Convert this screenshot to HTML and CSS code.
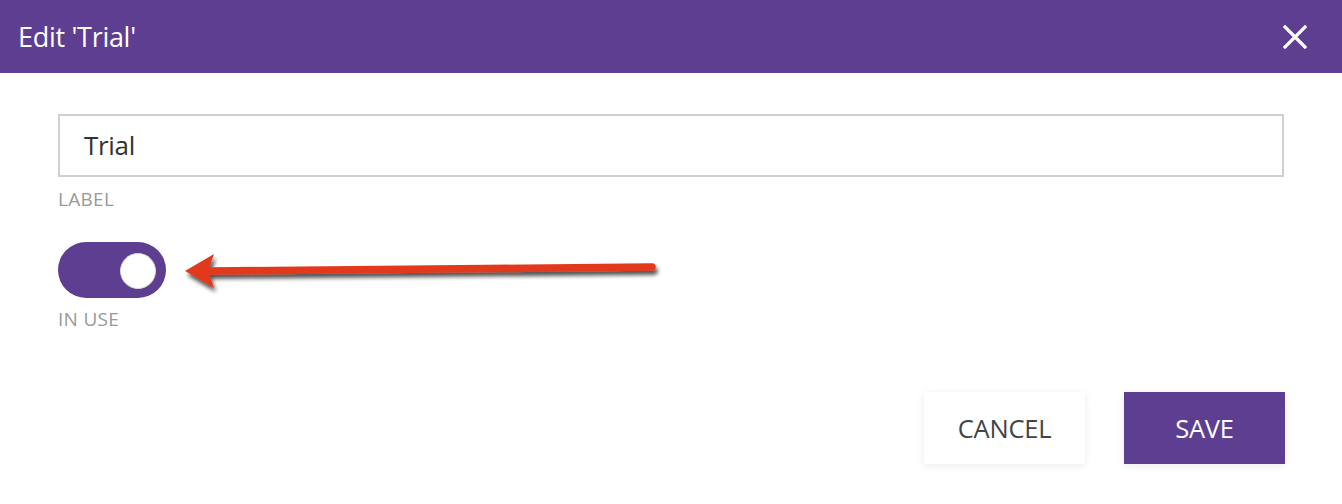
FILE: index.html
```html
<!DOCTYPE html>
<html>
<head>
<meta charset="utf-8">
<link rel="stylesheet" href="styles.css">
</head>
<body>
<div class="dialog">
  <header class="dlg-head">
    <h1 class="dlg-title">Edit 'Trial'</h1>
    <button class="close" aria-label="Close">
      <svg width="24" height="24" viewBox="0 0 24 24"><path d="M2 2 L22 22 M22 2 L2 22" stroke="#fff" stroke-width="3.2" stroke-linecap="square"/></svg>
    </button>
  </header>
  <main class="dlg-body">
    <div class="field">
      <div class="input">Trial</div>
      <div class="caption">LABEL</div>
    </div>
    <div class="field toggle-field">
      <div class="toggle"><span class="knob"></span></div>
      <div class="caption">IN USE</div>
      <svg class="annot" width="520" height="60" viewBox="0 0 520 60">
        <defs>
          <filter id="sh" x="-10%" y="-50%" width="120%" height="200%">
            <feGaussianBlur in="SourceAlpha" stdDeviation="2"/>
            <feOffset dx="2" dy="4" result="b"/>
            <feComponentTransfer><feFuncA type="linear" slope="0.7"/></feComponentTransfer>
            <feMerge><feMergeNode/><feMergeNode in="SourceGraphic"/></feMerge>
          </filter>
        </defs>
        <g filter="url(#sh)">
          <path d="M40 29 L482 25" stroke="#e2391f" stroke-width="7.5" stroke-linecap="round"/>
          <path d="M15 29 L44 12 L38 29 L44 46 Z" fill="#e2391f"/>
        </g>
      </svg>
    </div>
  </main>
  <footer class="dlg-foot">
    <button class="btn btn-cancel">CANCEL</button>
    <button class="btn btn-save">SAVE</button>
  </footer>
</div>
</body>
</html>
```

FILE: styles.css
```css
html, body {
  margin: 0;
  padding: 0;
  background: #fff;
  font-family: "Open Sans", "Noto Sans", sans-serif;
}
.dialog {
  width: 1342px;
  height: 504px;
  display: flex;
  flex-direction: column;
}
.dlg-head {
  height: 73px;
  background: #5e3e91;
  display: flex;
  align-items: center;
  justify-content: space-between;
  padding: 0 35px 0 18px;
  box-sizing: border-box;
}
.dlg-title {
  margin: 0;
  font-weight: 400;
  font-size: 27px;
  color: #fff;
  letter-spacing: -0.3px;
  padding-bottom: 1px;
}
.close {
  background: none;
  border: 0;
  padding: 0;
  width: 24px;
  height: 24px;
  display: flex;
}
.dlg-body {
  padding: 41px 58px 0 58px;
  display: flex;
  flex-direction: column;
}
.input {
  height: 63px;
  box-sizing: border-box;
  border: 2px solid #d0d0d0;
  padding: 0 0 2px 24px;
  display: flex;
  align-items: center;
  font-size: 26px;
  color: #333;
  letter-spacing: -0.3px;
}
.caption {
  font-size: 19px;
  color: #999;
  margin-top: 9px;
  line-height: 26px;
  letter-spacing: 0.3px;
}
.toggle-field {
  margin-top: 30px;
  position: relative;
}
.toggle {
  width: 108px;
  height: 56px;
  border-radius: 28px;
  background: #5e3e91;
  position: relative;
}
.knob {
  position: absolute;
  left: 62px;
  top: 11px;
  width: 34px;
  height: 34px;
  border-radius: 50%;
  background: #fff;
  border: 1.5px solid #d8d8d8;
  box-sizing: content-box;
  margin: -0.5px;
}
.toggle-field .caption {
  margin-top: 8px;
}
.annot {
  position: absolute;
  left: 112px;
  top: 0px;
}
.dlg-foot {
  margin-top: auto;
  height: 112px;
  display: flex;
  justify-content: flex-end;
  align-items: flex-start;
  gap: 39px;
  padding-right: 57px;
}
.btn {
  width: 161px;
  height: 72px;
  border: 0;
  font-family: "Open Sans", "Noto Sans", sans-serif;
  font-size: 25.5px;
  letter-spacing: -0.2px;
  cursor: pointer;
  box-shadow: 0 2px 8px rgba(0,0,0,0.08);
}
.btn-cancel {
  background: #fff;
  color: #444;
}
.btn-save {
  background: #5e3e91;
  color: #fff;
}
```
